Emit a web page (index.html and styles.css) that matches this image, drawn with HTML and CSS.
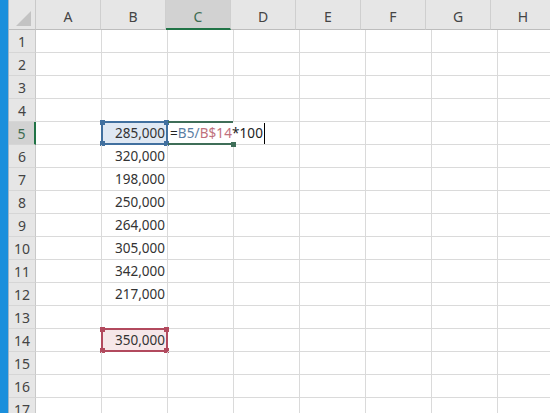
FILE: index.html
```html
<!DOCTYPE html>
<html lang="ja">
<head>
<meta charset="utf-8">
<link rel="stylesheet" href="styles.css">
</head>
<body>
<div class="app">
  <div class="strip"></div>
  <div class="sheet">
    <div class="row head">
      <div class="corner"><span class="tri"></span></div>
      <div class="ch">A</div><div class="ch">B</div><div class="ch sel">C</div><div class="ch">D</div>
      <div class="ch">E</div><div class="ch">F</div><div class="ch">G</div><div class="ch">H</div>
    </div>
    <div class="row"><div class="rh">1</div><div class="c"></div><div class="c"></div><div class="c"></div><div class="c"></div><div class="c"></div><div class="c"></div><div class="c"></div><div class="c"></div></div>
    <div class="row"><div class="rh">2</div><div class="c"></div><div class="c"></div><div class="c"></div><div class="c"></div><div class="c"></div><div class="c"></div><div class="c"></div><div class="c"></div></div>
    <div class="row"><div class="rh">3</div><div class="c"></div><div class="c"></div><div class="c"></div><div class="c"></div><div class="c"></div><div class="c"></div><div class="c"></div><div class="c"></div></div>
    <div class="row"><div class="rh">4</div><div class="c"></div><div class="c"></div><div class="c"></div><div class="c"></div><div class="c"></div><div class="c"></div><div class="c"></div><div class="c"></div></div>
    <div class="row"><div class="rh sel">5</div><div class="c"></div>
      <div class="c num ref-blue">285,000<span class="range blue"><i class="h tl"></i><i class="h tr"></i><i class="h bl"></i><i class="h br"></i></span></div>
      <div class="c edit"><span class="formula">=<span class="fb">B5/</span><span class="fr">B$14</span>*100<span class="caret"></span></span><span class="active"><i class="gh"></i></span></div>
      <div class="c"></div><div class="c"></div><div class="c"></div><div class="c"></div><div class="c"></div></div>
    <div class="row"><div class="rh">6</div><div class="c"></div><div class="c num">320,000</div><div class="c"></div><div class="c"></div><div class="c"></div><div class="c"></div><div class="c"></div><div class="c"></div></div>
    <div class="row"><div class="rh">7</div><div class="c"></div><div class="c num">198,000</div><div class="c"></div><div class="c"></div><div class="c"></div><div class="c"></div><div class="c"></div><div class="c"></div></div>
    <div class="row"><div class="rh">8</div><div class="c"></div><div class="c num">250,000</div><div class="c"></div><div class="c"></div><div class="c"></div><div class="c"></div><div class="c"></div><div class="c"></div></div>
    <div class="row"><div class="rh">9</div><div class="c"></div><div class="c num">264,000</div><div class="c"></div><div class="c"></div><div class="c"></div><div class="c"></div><div class="c"></div><div class="c"></div></div>
    <div class="row"><div class="rh">10</div><div class="c"></div><div class="c num">305,000</div><div class="c"></div><div class="c"></div><div class="c"></div><div class="c"></div><div class="c"></div><div class="c"></div></div>
    <div class="row"><div class="rh">11</div><div class="c"></div><div class="c num">342,000</div><div class="c"></div><div class="c"></div><div class="c"></div><div class="c"></div><div class="c"></div><div class="c"></div></div>
    <div class="row"><div class="rh">12</div><div class="c"></div><div class="c num">217,000</div><div class="c"></div><div class="c"></div><div class="c"></div><div class="c"></div><div class="c"></div><div class="c"></div></div>
    <div class="row"><div class="rh">13</div><div class="c"></div><div class="c"></div><div class="c"></div><div class="c"></div><div class="c"></div><div class="c"></div><div class="c"></div><div class="c"></div></div>
    <div class="row"><div class="rh">14</div><div class="c"></div>
      <div class="c num ref-red">350,000<span class="range red"><i class="h tl"></i><i class="h tr"></i><i class="h bl"></i><i class="h br"></i></span></div>
      <div class="c"></div><div class="c"></div><div class="c"></div><div class="c"></div><div class="c"></div><div class="c"></div></div>
    <div class="row"><div class="rh">15</div><div class="c"></div><div class="c"></div><div class="c"></div><div class="c"></div><div class="c"></div><div class="c"></div><div class="c"></div><div class="c"></div></div>
    <div class="row"><div class="rh">16</div><div class="c"></div><div class="c"></div><div class="c"></div><div class="c"></div><div class="c"></div><div class="c"></div><div class="c"></div><div class="c"></div></div>
    <div class="row"><div class="rh">17</div><div class="c"></div><div class="c"></div><div class="c"></div><div class="c"></div><div class="c"></div><div class="c"></div><div class="c"></div><div class="c"></div></div>
  </div>
</div>
</body>
</html>
```
FILE: styles.css
```css
html, body {
  margin: 0;
  padding: 0;
  background: #ffffff;
  overflow: hidden;
}
body {
  font-family: "Noto Sans", "Noto Sans CJK JP", sans-serif;
  font-size: 13.5px;
  color: #333333;
}
.app {
  display: flex;
  width: 550px;
  height: 413px;
  overflow: hidden;
}
.strip {
  width: 8px;
  flex: 0 0 8px;
  background: #1a8fdc;
  border-right: 1px solid #9fb6c8;
}
.sheet {
  flex: 1 0 auto;
  display: flex;
  flex-direction: column;
}
.row {
  display: flex;
  height: 23px;
  flex: 0 0 23px;
}
.row.head {
  height: 30px;
  flex: 0 0 30px;
  background: #e6e6e6;
}
.corner {
  width: 26px;
  flex: 0 0 26px;
  border-right: 1px solid #c9c9c9;
  border-bottom: 1px solid #bdbdbd;
  position: relative;
  background: #e6e6e6;
}
.tri {
  position: absolute;
  right: 4px;
  bottom: 3px;
  width: 15px;
  height: 15px;
  background: #c3c3c3;
  clip-path: polygon(100% 0, 100% 100%, 0 100%);
}
.ch {
  width: 65px;
  flex: 0 0 65px;
  border-right: 1px solid #cfcfcf;
  border-bottom: 1px solid #bdbdbd;
  display: flex;
  align-items: center;
  justify-content: center;
  padding-top: 4px;
  box-sizing: border-box;
  color: #444444;
  font-size: 14px;
}
.ch.sel {
  background: #d2d2d2;
  border-bottom: 2px solid #217346;
  color: #3c6b50;
}
.rh {
  width: 26px;
  flex: 0 0 26px;
  background: #e6e6e6;
  border-right: 1px solid #c9c9c9;
  border-bottom: 1px solid #d6d6d6;
  display: flex;
  align-items: center;
  justify-content: center;
  color: #444444;
  font-size: 14px;
  box-sizing: content-box;
  height: 22px;
}
.rh.sel {
  background: #d2d2d2;
  border-right: 2px solid #217346;
  width: 25px;
  flex-basis: 25px;
  color: #3c6b50;
}
.c {
  width: 65px;
  flex: 0 0 65px;
  height: 22px;
  border-right: 1px solid #dadada;
  border-bottom: 1px solid #dadada;
  box-sizing: content-box;
  display: flex;
  align-items: center;
  white-space: nowrap;
  position: relative;
}
.num {
  justify-content: flex-end;
  padding-right: 2px;
  width: 63px;
  flex-basis: 63px;
  color: #333333;
}
.ref-blue { background: #dfe8f3; }
.ref-red { background: #f6e7e9; }
.range {
  position: absolute;
  left: -1px;
  top: -1px;
  right: -1px;
  bottom: -1px;
  border: 2px solid;
  box-sizing: border-box;
}
.range.blue { border-color: #41709f; }
.range.red { border-color: #b24a5e; }
.h {
  position: absolute;
  width: 5px;
  height: 5px;
}
.range.blue .h { background: #41709f; }
.range.red .h { background: #b24a5e; }
.h.tl { left: -3px; top: -3px; }
.h.tr { right: -3px; top: -3px; }
.h.bl { left: -3px; bottom: -3px; }
.h.br { right: -3px; bottom: -3px; }
.edit {
  border-right-color: transparent;
  overflow: visible;
  z-index: 1;
}
.formula {
  padding-left: 2px;
  color: #222222;
  display: flex;
  align-items: center;
  letter-spacing: 0.1px;
}
.fb { color: #5b7ea3; }
.fr { color: #c0717d; }
.caret {
  display: inline-block;
  width: 1px;
  height: 21px;
  background: #000000;
  margin-left: 1px;
}
.active {
  position: absolute;
  left: 0;
  right: 0;
  top: -1px;
  bottom: -1px;
  border-top: 2px solid #3f6e58;
  border-bottom: 2px solid #3f6e58;
  box-sizing: border-box;
}
.gh {
  position: absolute;
  right: -3px;
  bottom: -4px;
  width: 5px;
  height: 5px;
  background: #3f6e58;
}
```
